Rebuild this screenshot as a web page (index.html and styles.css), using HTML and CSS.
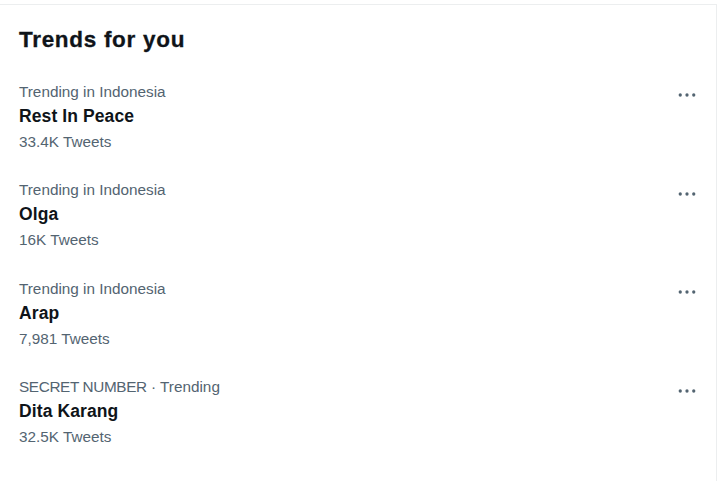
FILE: index.html
```html
<!DOCTYPE html>
<html>
<head>
<meta charset="utf-8">
<link rel="stylesheet" href="styles.css">
</head>
<body>
<div class="page">
  <section class="panel">
    <h2 class="title">Trends for you</h2>
    <div class="trend">
      <div class="info">
        <div class="meta">Trending in Indonesia</div>
        <div class="name">Rest In Peace</div>
        <div class="count">33.4K Tweets</div>
      </div>
      <svg class="more" viewBox="0 0 24 24"><circle cx="3" cy="12" r="2.2"/><circle cx="12" cy="12" r="2.2"/><circle cx="21" cy="12" r="2.2"/></svg>
    </div>
    <div class="trend">
      <div class="info">
        <div class="meta">Trending in Indonesia</div>
        <div class="name">Olga</div>
        <div class="count">16K Tweets</div>
      </div>
      <svg class="more" viewBox="0 0 24 24"><circle cx="3" cy="12" r="2.2"/><circle cx="12" cy="12" r="2.2"/><circle cx="21" cy="12" r="2.2"/></svg>
    </div>
    <div class="trend">
      <div class="info">
        <div class="meta">Trending in Indonesia</div>
        <div class="name">Arap</div>
        <div class="count">7,981 Tweets</div>
      </div>
      <svg class="more" viewBox="0 0 24 24"><circle cx="3" cy="12" r="2.2"/><circle cx="12" cy="12" r="2.2"/><circle cx="21" cy="12" r="2.2"/></svg>
    </div>
    <div class="trend">
      <div class="info">
        <div class="meta"><span class="caps">SECRET NUMBER</span> · Trending</div>
        <div class="name">Dita Karang</div>
        <div class="count">32.5K Tweets</div>
      </div>
      <svg class="more" viewBox="0 0 24 24"><circle cx="3" cy="12" r="2.2"/><circle cx="12" cy="12" r="2.2"/><circle cx="21" cy="12" r="2.2"/></svg>
    </div>
  </section>
</div>
</body>
</html>
```
FILE: styles.css
```css
html, body {
  margin: 0;
  padding: 0;
  background: #ffffff;
}
body {
  font-family: "Liberation Sans", Arial, sans-serif;
  color: #0f1419;
}
.page {
  padding-top: 4px;
  height: 477px;
}
.panel {
  width: 716px;
  height: 476px;
  border-top: 1px solid #eceeef;
  border-right: 1px solid #eceeef;
  background: #ffffff;
}
.title {
  margin: 0;
  padding: 20.5px 19px 13px;
  font-size: 22.5px;
  line-height: 28px;
  font-weight: 700;
  letter-spacing: 0.7px;
  color: #0f1419;
  -webkit-text-stroke: 0.3px #0f1419;
}
.trend {
  display: flex;
  justify-content: space-between;
  align-items: flex-start;
  padding: 12px 20px 11.5px 19px;
}
.info {
  display: flex;
  flex-direction: column;
}
.meta, .count {
  font-size: 15.3px;
  line-height: 25px;
  color: #536471;
}
.caps {
  letter-spacing: -0.35px;
}
.name {
  font-size: 17.5px;
  line-height: 25px;
  font-weight: 700;
  letter-spacing: 0.1px;
  color: #0f1419;
}
.more {
  width: 18px;
  height: 18px;
  margin-top: 7.5px;
  fill: #536471;
}
```
